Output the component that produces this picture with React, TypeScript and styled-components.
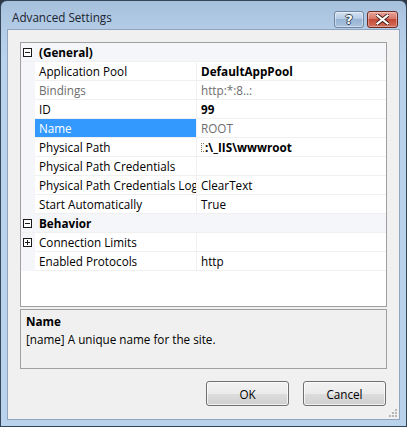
import React from "react";
import styled, { createGlobalStyle } from "styled-components";

const GlobalStyle = createGlobalStyle`
  html, body {
    margin: 0;
    padding: 0;
    background: #2e3a46;
  }
  * {
    box-sizing: border-box;
  }
`;

interface Property {
  name: string;
  value?: string;
  bold?: boolean;
  readOnly?: boolean;
  selected?: boolean;
  expandable?: boolean;
  dotted?: boolean;
}

interface Category {
  title: string;
  items: Property[];
}

const categories: Category[] = [
  {
    title: "(General)",
    items: [
      { name: "Application Pool", value: "DefaultAppPool", bold: true },
      { name: "Bindings", value: "http:*:8..:", readOnly: true },
      { name: "ID", value: "99", bold: true },
      { name: "Name", value: "ROOT", readOnly: true, selected: true },
      { name: "Physical Path", value: ":\\_IIS\\wwwroot", bold: true, dotted: true },
      { name: "Physical Path Credentials", value: "" },
      { name: "Physical Path Credentials Logon Type", value: "ClearText" },
      { name: "Start Automatically", value: "True" },
    ],
  },
  {
    title: "Behavior",
    items: [
      { name: "Connection Limits", value: "", expandable: true },
      { name: "Enabled Protocols", value: "http" },
    ],
  },
];

function ToggleBox({ open }: { open: boolean }) {
  return (
    <svg width="9" height="9" viewBox="0 0 9 9">
      <rect x="0.5" y="0.5" width="8" height="8" fill="#fff" stroke="#1a1a1a" />
      <line x1="2" y1="4.5" x2="7" y2="4.5" stroke="#1a1a1a" />
      {!open && <line x1="4.5" y1="2" x2="4.5" y2="7" stroke="#1a1a1a" />}
    </svg>
  );
}

export default function App() {
  return (
    <>
      <GlobalStyle />
      <Window>
        <TitleBar>
          <Title>Advanced Settings</Title>
          <CaptionButtons>
            <HelpButton>
              <CaptionGlyph>?</CaptionGlyph>
            </HelpButton>
            <CloseButton>
              <svg width="13" height="11" viewBox="0 0 13 11">
                <path
                  d="M1.5 1.5 L11.5 9.5 M11.5 1.5 L1.5 9.5"
                  stroke="#3d1a14"
                  strokeWidth="4"
                  strokeLinecap="square"
                />
                <path
                  d="M1.5 1.5 L11.5 9.5 M11.5 1.5 L1.5 9.5"
                  stroke="#ffffff"
                  strokeWidth="2.2"
                  strokeLinecap="square"
                />
              </svg>
            </CloseButton>
          </CaptionButtons>
        </TitleBar>
        <Client>
          <Grid>
            {categories.map((cat) => (
              <React.Fragment key={cat.title}>
                <CategoryRow>
                  <Margin>
                    <ToggleBox open />
                  </Margin>
                  <CategoryTitle>{cat.title}</CategoryTitle>
                </CategoryRow>
                {cat.items.map((item) => (
                  <PropRow key={item.name}>
                    <Margin>{item.expandable && <ToggleBox open={false} />}</Margin>
                    <NameCell $selected={item.selected} $readOnly={item.readOnly}>
                      {item.name}
                    </NameCell>
                    <ValueCell $bold={item.bold} $readOnly={item.readOnly}>
                      {item.dotted && <DottedGlyph />}
                      {item.value}
                    </ValueCell>
                  </PropRow>
                ))}
              </React.Fragment>
            ))}
          </Grid>
          <Description>
            <DescTitle>Name</DescTitle>
            <DescText>[name] A unique name for the site.</DescText>
          </Description>
          <ButtonBar>
            <DialogButton>OK</DialogButton>
            <DialogButton>Cancel</DialogButton>
          </ButtonBar>
          <Grip>
            <svg width="8" height="8" viewBox="0 0 8 8">
              <rect x="6" y="0" width="2" height="2" fill="#b8b8b8" />
              <rect x="3" y="3" width="2" height="2" fill="#b8b8b8" />
              <rect x="6" y="3" width="2" height="2" fill="#b8b8b8" />
              <rect x="0" y="6" width="2" height="2" fill="#b8b8b8" />
              <rect x="3" y="6" width="2" height="2" fill="#b8b8b8" />
              <rect x="6" y="6" width="2" height="2" fill="#b8b8b8" />
            </svg>
          </Grip>
        </Client>
      </Window>
    </>
  );
}

const Window = styled.div`
  width: 407px;
  height: 427px;
  border: 1px solid #34465a;
  border-radius: 7px 7px 0 0;
  background: linear-gradient(to bottom, #a6c0dc 0px, #b4cce6 28px, #bad3ec 60px, #bad3ec 100%);
  padding: 0 6px 6px 6px;
  display: flex;
  flex-direction: column;
  font-family: "Open Sans", "Noto Sans", sans-serif;
  font-size: 11.7px;
  color: #000;
  overflow: hidden;
`;

const TitleBar = styled.div`
  height: 28px;
  display: flex;
  align-items: center;
  justify-content: space-between;
  padding-left: 5px;
`;

const Title = styled.div`
  font-size: 11.7px;
  color: #1b2430;
  padding-top: 4px;
`;

const CaptionButtons = styled.div`
  display: flex;
  gap: 3px;
  align-self: flex-start;
  margin-top: 10px;
  margin-right: 2px;
`;

const CaptionButtonBase = styled.div`
  height: 17px;
  border-radius: 3px;
  display: flex;
  align-items: center;
  justify-content: center;
`;

const HelpButton = styled(CaptionButtonBase)`
  width: 30px;
  border: 1px solid #6f86a3;
  background: linear-gradient(to bottom, #d4e2f1 0%, #b5cbe3 45%, #98b4d4 50%, #a9c3de 100%);
  box-shadow: inset 0 0 0 1px rgba(255, 255, 255, 0.45);
`;

const CloseButton = styled(CaptionButtonBase)`
  width: 31px;
  border: 1px solid #6b2a22;
  background: linear-gradient(to bottom, #e8a396 0%, #d6786a 45%, #c44a36 50%, #d2705c 100%);
  box-shadow: inset 0 0 0 1px rgba(255, 255, 255, 0.35);
`;

const CaptionGlyph = styled.span`
  font-family: "DejaVu Sans", sans-serif;
  font-weight: bold;
  font-size: 13px;
  line-height: 1;
  color: #fff;
  text-shadow: 1px 0 0 #34465a, -1px 0 0 #34465a, 0 1px 0 #34465a, 0 -1px 0 #34465a;
`;

const Client = styled.div`
  flex: 1;
  position: relative;
  background: #f0f0f0;
  border: 1px solid #8fa5bd;
  padding: 12px 12px 0 12px;
  display: flex;
  flex-direction: column;
`;

const Grid = styled.div`
  height: 265px;
  border: 1px solid #a0a0a0;
  background: #fff;
  overflow: hidden;
`;

const CategoryRow = styled.div`
  display: grid;
  grid-template-columns: 14px 1fr;
  height: 19px;
  background: #f4f6fa;
  border-bottom: 1px solid #f0f0f0;
`;

const PropRow = styled.div`
  display: grid;
  grid-template-columns: 14px 162px 1fr;
  height: 19px;
`;

const Margin = styled.div`
  display: flex;
  align-items: center;
  padding-left: 2px;
  background: #f4f6fa;
`;

const CategoryTitle = styled.div`
  font-weight: bold;
  padding-left: 4px;
  line-height: 18px;
  white-space: nowrap;
`;

const NameCell = styled.div<{ $selected?: boolean; $readOnly?: boolean }>`
  padding-left: 4px;
  line-height: 18px;
  white-space: nowrap;
  overflow: hidden;
  text-overflow: clip;
  border-right: 1px solid #f0f0f0;
  border-bottom: 1px solid #f0f0f0;
  background: ${(p) => (p.$selected ? "#3399ff" : "#fff")};
  color: ${(p) => (p.$selected ? "#fff" : p.$readOnly ? "#6d6d6d" : "#000")};
`;

const ValueCell = styled.div<{ $bold?: boolean; $readOnly?: boolean }>`
  padding-left: 4px;
  line-height: 18px;
  white-space: nowrap;
  overflow: hidden;
  border-bottom: 1px solid #f0f0f0;
  font-weight: ${(p) => (p.$bold ? "bold" : "normal")};
  color: ${(p) => (p.$readOnly ? "#6d6d6d" : "#000")};
  display: flex;
  align-items: center;
`;

const DottedGlyph = styled.span`
  display: inline-block;
  width: 3px;
  height: 9px;
  margin-right: 1px;
  border-left: 1px dotted #8a7350;
  border-top: 1px dotted #8a7350;
  border-bottom: 1px dotted #8a7350;
`;

const Description = styled.div`
  margin-top: 2px;
  height: 60px;
  border: 1px solid #a0a0a0;
  background: #f0f0f0;
  padding: 2px 5px;
  line-height: 18px;
`;

const DescTitle = styled.div`
  font-weight: bold;
`;

const DescText = styled.div``;

const ButtonBar = styled.div`
  margin-top: 12px;
  display: flex;
  justify-content: flex-end;
  gap: 14px;
  padding-right: 1px;
`;

const DialogButton = styled.button`
  width: 83px;
  height: 25px;
  border: 1px solid #707070;
  border-radius: 3px;
  background: linear-gradient(to bottom, #f2f2f2 0%, #ebebeb 50%, #dddddd 51%, #cfcfcf 100%);
  box-shadow: inset 0 0 0 1px rgba(255, 255, 255, 0.7);
  font-family: "Open Sans", "Noto Sans", sans-serif;
  font-size: 11.7px;
  color: #000;
  padding: 0;
`;

const Grip = styled.div`
  position: absolute;
  right: 2px;
  bottom: 2px;
  line-height: 0;
`;
